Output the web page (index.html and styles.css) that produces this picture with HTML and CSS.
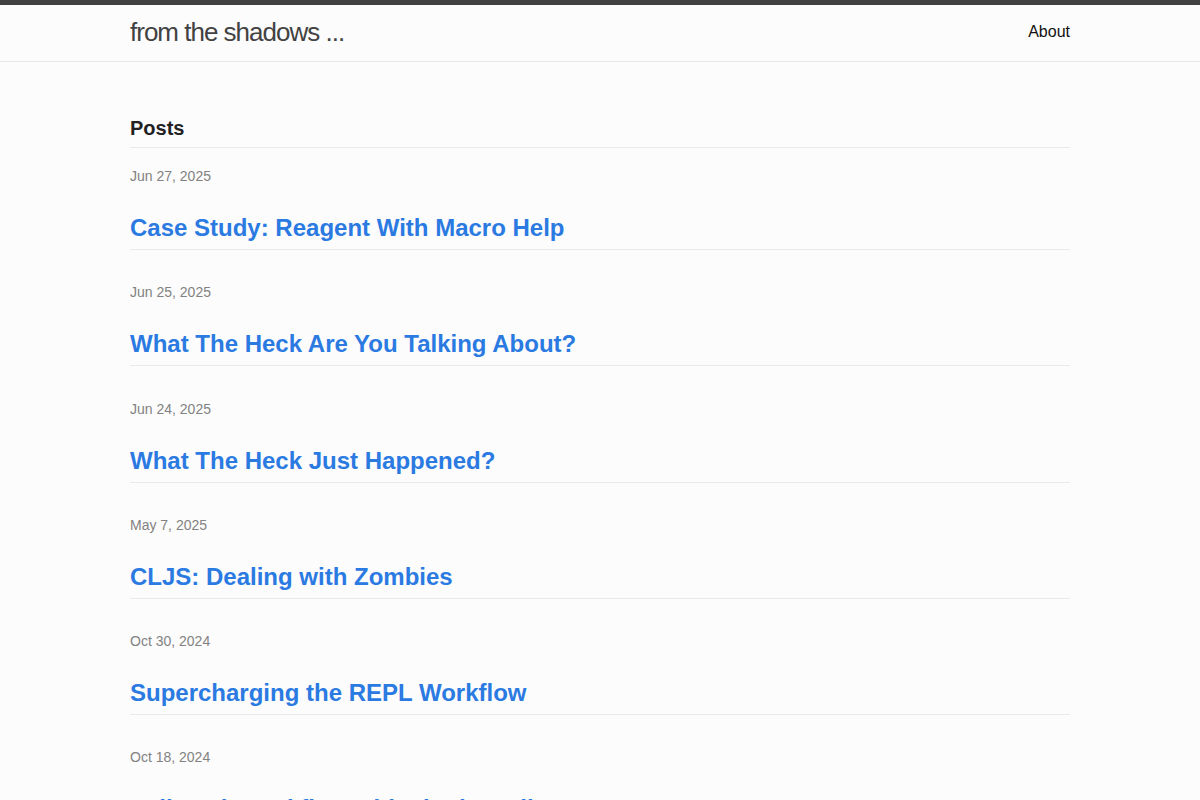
FILE: index.html
```html
<!DOCTYPE html>
<html lang="en">
<head>
<meta charset="utf-8">
<title>from the shadows ...</title>
<link rel="stylesheet" href="styles.css">
</head>
<body>
<header class="site-header">
  <div class="wrapper header-inner">
    <a class="site-title" href="#">from the shadows ...</a>
    <nav class="site-nav"><a class="page-link" href="#">About</a></nav>
  </div>
</header>
<main class="page-content">
  <div class="wrapper">
    <h2 class="post-list-heading">Posts</h2>
    <ul class="post-list">
      <li class="post-item"><span class="post-meta">Jun 27, 2025</span><h3 class="post-title"><a class="post-link" href="#">Case Study: Reagent With Macro Help</a></h3></li>
      <li class="post-item"><span class="post-meta">Jun 25, 2025</span><h3 class="post-title"><a class="post-link" href="#">What The Heck Are You Talking About?</a></h3></li>
      <li class="post-item"><span class="post-meta">Jun 24, 2025</span><h3 class="post-title"><a class="post-link" href="#">What The Heck Just Happened?</a></h3></li>
      <li class="post-item"><span class="post-meta">May 7, 2025</span><h3 class="post-title"><a class="post-link" href="#">CLJS: Dealing with Zombies</a></h3></li>
      <li class="post-item"><span class="post-meta">Oct 30, 2024</span><h3 class="post-title"><a class="post-link" href="#">Supercharging the REPL Workflow</a></h3></li>
      <li class="post-item"><span class="post-meta">Oct 18, 2024</span><h3 class="post-title"><a class="post-link" href="#">Fullstack Workflow with shadow-cljs</a></h3></li>
    </ul>
  </div>
</main>
</body>
</html>
```
FILE: styles.css
```css
* { box-sizing: border-box; }
html, body { margin: 0; padding: 0; }
body {
  font-family: "Liberation Sans", Arial, sans-serif;
  font-size: 16px;
  line-height: 1.5;
  color: #111;
  background: #fcfcfc;
}
a { text-decoration: none; }
.wrapper {
  max-width: 940px;
  margin: 0 auto;
}
.site-header {
  border-top: 5px solid #424242;
  border-bottom: 1px solid #e8e8e8;
  height: 62px;
}
.header-inner {
  display: flex;
  justify-content: space-between;
  align-items: center;
  height: 56px;
  padding-bottom: 2px;
}
.site-title {
  font-size: 26px;
  font-weight: 300;
  letter-spacing: -1px;
  color: #424242;
  line-height: 54px;
}
.page-link {
  color: #111;
  font-size: 16px;
  line-height: 54px;
}
.page-content {
  padding-top: 51px;
}
.post-list-heading {
  margin: 0;
  font-size: 20px;
  font-weight: 700;
  line-height: 30px;
  color: #222;
  padding-bottom: 4px;
  border-bottom: 1px solid #eaeaea;
}
.post-list {
  list-style: none;
  margin: 0;
  padding: 0;
}
.post-item {
  display: flex;
  flex-direction: column;
  padding-top: 18px;
  margin-bottom: 14.25px;
}
.post-meta {
  font-size: 14px;
  line-height: 21px;
  color: #828282;
}
.post-title {
  margin: 23px 0 0;
  font-size: 24px;
  font-weight: 700;
  line-height: 36px;
  padding-bottom: 3px;
  border-bottom: 1px solid #eaeaea;
}
.post-link { color: #2a7ae2; }
```
